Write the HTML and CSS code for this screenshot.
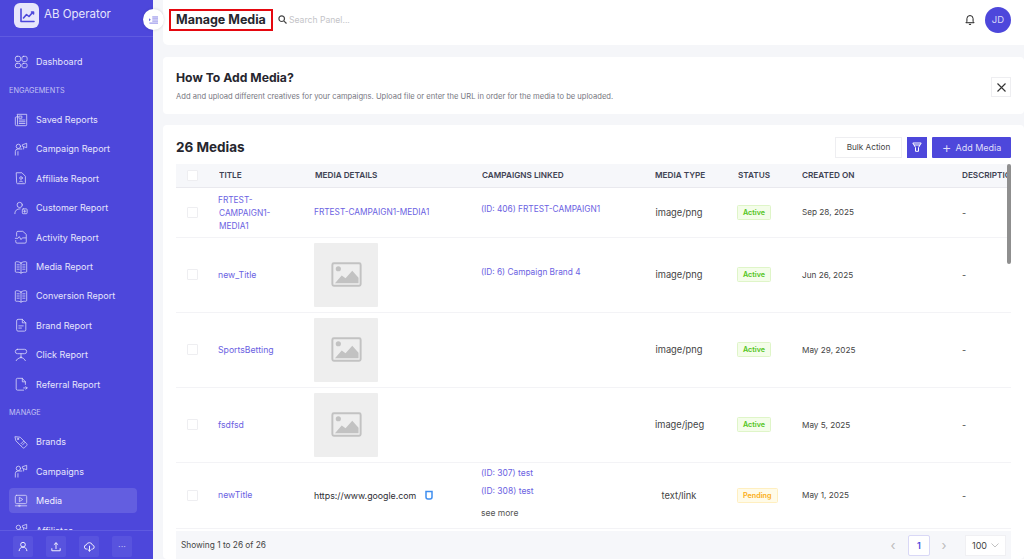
FILE: index.html
```html
<!DOCTYPE html>
<html lang="en">
<head>
<meta charset="utf-8">
<title>Manage Media</title>
<link rel="stylesheet" href="styles.css">
</head>
<body>
<svg class="defs" width="0" height="0">
  <symbol id="i-dash" viewBox="0 0 16 16"><rect x="1.500" y="1.500" width="6" height="6" rx="2"/><rect x="9" y="1.500" width="6" height="6" rx="2"/><rect x="1.500" y="9.500" width="6" height="5" rx="2"/><rect x="9" y="9.500" width="6" height="5" rx="2"/></symbol>
  <symbol id="i-saved" viewBox="0 0 16 16"><path d="M4 1.500h10.500v12a1 1 0 0 1-1 1H3a1.500 1.500 0 0 1-1.500-1.500V5L4 4z"/><path d="M4 4v9"/><rect x="6" y="3.500" width="3" height="2.500"/><path d="M6 8h6.500M6 10h6.500M6 12h6.500"/></symbol>
  <symbol id="i-camp" viewBox="0 0 16 16"><circle cx="5" cy="5" r="2.500"/><path d="M1.500 15v-4a3 3 0 0 1 3-3H9M4.500 11v4M10 3l4.500-1.500v5L10 5zM11 6v2"/></symbol>
  <symbol id="i-aff" viewBox="0 0 16 16"><path d="M3 2h6l4 4v7.500a1 1 0 0 1-1 1H4a1 1 0 0 1-1-1z"/><circle cx="8" cy="8" r="1.500"/><path d="M6 12.500c.5-1.500 3.500-1.500 4 0"/></symbol>
  <symbol id="i-cust" viewBox="0 0 16 16"><circle cx="6.500" cy="4.500" r="3"/><path d="M1 14.500c0-3.500 2-5.500 6-5.500"/><rect x="9.500" y="9" width="5.500" height="5.500" rx="1"/><path d="M12.200 10.500v2.500M11 11.700h2.500"/></symbol>
  <symbol id="i-act" viewBox="0 0 16 16"><path d="M3 7V3a1.500 1.500 0 0 1 1.500-1.500H10L14 5v8.500a1.500 1.500 0 0 1-1.500 1.500h-9A1.500 1.500 0 0 1 2 13.500V12"/><path d="M1.500 9.500h3l1.500-2 2 3.500 1.500-2h4"/></symbol>
  <symbol id="i-book" viewBox="0 0 16 16"><path d="M8 3.500C6.500 2 4 1.800 2.500 2A1 1 0 0 0 1.500 3v10a1 1 0 0 0 1 1c2 0 4 0 5.500 1 1.500-1 3.500-1 5.500-1a1 1 0 0 0 1-1V3a1 1 0 0 0-1-1C12 1.800 9.500 2 8 3.500zM8 3.500V15M3.500 5.500h2.500M3.500 8h2.500M3.500 10.500h2.500M10 5.500h2.500M10 8h2.500M10 10.500h2.500"/></symbol>
  <symbol id="i-doc" viewBox="0 0 16 16"><path d="M3 3a1.500 1.500 0 0 1 1.500-1.500H9.500L13.500 5.500v8a1.500 1.500 0 0 1-1.500 1.500H4.500A1.500 1.500 0 0 1 3 13.500zM9.500 1.500v4h4M5.500 9h5M5.500 11.500h3"/></symbol>
  <symbol id="i-click" viewBox="0 0 16 16"><rect x="1.500" y="1.500" width="13" height="5" rx="2.500"/><path d="M8 6.500v4M8 10.500l-4 2-1.500 2M8 10.500l3 1.500 2 2.500M8 10.500v1"/></symbol>
  <symbol id="i-ref" viewBox="0 0 16 16"><path d="M13 8.500V5.500L9.500 1.500H4A1.500 1.500 0 0 0 2.500 3v10.500A1.500 1.500 0 0 0 4 15h7M9.500 1.500v4H13M11 12.500h4M13.500 11l1.500 1.500-1.500 1.500"/></symbol>
  <symbol id="i-tag" viewBox="0 0 16 16"><path d="M1.500 2l5.500.5 7.500 7.500a1.500 1.500 0 0 1 0 2l-2.500 2.500a1.500 1.500 0 0 1-2 0L2.500 7z"/><circle cx="4.500" cy="4.500" r=".8"/><path d="M8 10l3-3M9.500 11.500l3-3"/></symbol>
  <symbol id="i-media" viewBox="0 0 16 16"><rect x="1.500" y="1.500" width="13" height="9.500" rx="1.500"/><path d="M6.500 4l3.500 2.200-3.500 2.300zM1.500 13.500h13"/><circle cx="6" cy="13.500" r=".8"/></symbol>
  <symbol id="i-pic" viewBox="0 0 32 26"><rect x="1.300" y="1.300" width="29.400" height="23.400" rx="1.500" fill="none" stroke="currentColor" stroke-width="2"/><circle cx="7.500" cy="7" r="2.700" fill="currentColor"/><path d="M4 22l7-8 4 3 7-8 6.500 7.500V22z" fill="currentColor"/></symbol>
</svg>

<aside class="sidebar">
  <div class="brand">
    <span class="brand-logo"><svg width="20" height="20" viewBox="0 0 20 20" fill="none" stroke="#4d47db" stroke-width="1.600" stroke-linecap="round" stroke-linejoin="round"><path d="M4 3v12.500h13"/><path d="M6.500 12l3-3.500 2.500 2 4-4.500M14.500 6H16.500V8"/></svg></span>
    <span class="brand-name">AB Operator</span>
  </div>
  <nav class="nav">
    <a class="nav-item nav-last"><svg class="nav-icon"><use href="#i-dash"/></svg>Dashboard</a>
    <div class="nav-label">ENGAGEMENTS</div>
    <a class="nav-item"><svg class="nav-icon"><use href="#i-saved"/></svg>Saved Reports</a>
    <a class="nav-item"><svg class="nav-icon"><use href="#i-camp"/></svg>Campaign Report</a>
    <a class="nav-item"><svg class="nav-icon"><use href="#i-aff"/></svg>Affiliate Report</a>
    <a class="nav-item"><svg class="nav-icon"><use href="#i-cust"/></svg>Customer Report</a>
    <a class="nav-item"><svg class="nav-icon"><use href="#i-act"/></svg>Activity Report</a>
    <a class="nav-item"><svg class="nav-icon"><use href="#i-book"/></svg>Media Report</a>
    <a class="nav-item"><svg class="nav-icon"><use href="#i-book"/></svg>Conversion Report</a>
    <a class="nav-item"><svg class="nav-icon"><use href="#i-doc"/></svg>Brand Report</a>
    <a class="nav-item"><svg class="nav-icon"><use href="#i-click"/></svg>Click Report</a>
    <a class="nav-item nav-last"><svg class="nav-icon"><use href="#i-ref"/></svg>Referral Report</a>
    <div class="nav-label">MANAGE</div>
    <a class="nav-item"><svg class="nav-icon"><use href="#i-tag"/></svg>Brands</a>
    <a class="nav-item"><svg class="nav-icon"><use href="#i-camp"/></svg>Campaigns</a>
    <a class="nav-item active"><svg class="nav-icon"><use href="#i-media"/></svg>Media</a>
    <a class="nav-item"><svg class="nav-icon"><use href="#i-camp"/></svg>Affiliates</a>
  </nav>
  <div class="side-foot">
    <span class="foot-btn"><svg width="10" height="11" viewBox="0 0 12 12" fill="none" stroke="#eeedfd" stroke-width="1.200"><circle cx="6" cy="3.800" r="2.800"/><path d="M1.300 11.500c.3-3 2-4.700 4.700-4.700s4.400 1.700 4.700 4.700"/></svg></span>
    <span class="foot-btn"><svg width="10" height="10" viewBox="0 0 12 12" fill="none" stroke="#eeedfd" stroke-width="1.200" stroke-linecap="round" stroke-linejoin="round"><path d="M6 8V1M3.800 3L6 1l2.200 2M1 8v2.500h10V8"/></svg></span>
    <span class="foot-btn"><svg width="11" height="10" viewBox="0 0 13 12" fill="none" stroke="#eeedfd" stroke-width="1.200" stroke-linecap="round" stroke-linejoin="round"><path d="M3.500 8.500H3a2.500 2.500 0 0 1-.3-5A3.800 3.800 0 0 1 10 3.600a2.500 2.500 0 0 1 .2 4.900H9.500M6.500 5v6M4.800 9.300l1.700 1.700 1.700-1.700"/></svg></span>
    <span class="foot-btn foot-more">···</span>
  </div>
</aside>

<button class="collapse" type="button" aria-label="Collapse menu"><svg width="9" height="8" viewBox="0 0 11 9" fill="none" stroke="#6b66e2" stroke-width="1"><path d="M4 .8h7M4 3.200h7M4 5.800h7M.5 8.300h10.500"/><path d="M0 2.500l2.300 1.800L0 6z" fill="#6b66e2" stroke="none"/></svg></button>

<main class="main">
  <header class="topbar">
    <div class="topbar-left">
      <h1 class="page-title">Manage Media</h1>
      <svg class="search-icon" width="9" height="9" viewBox="0 0 9 9" fill="none" stroke="#444" stroke-width="1.200"><circle cx="3.700" cy="3.700" r="2.800"/><path d="M5.800 5.800L8.500 8.500"/></svg>
      <span class="search-text">Search Panel...</span>
    </div>
    <div class="topbar-right">
      <svg width="10" height="12" viewBox="0 0 11 12" fill="none" stroke="#222" stroke-width="1.100" stroke-linejoin="round"><path d="M1 9h9L8.900 7.500V4.500a3.400 3.400 0 0 0-6.800 0v3zM4.300 10.800h2.400"/></svg>
      <span class="avatar">JD</span>
    </div>
  </header>

  <section class="info card">
    <div>
      <h2 class="info-title">How To Add Media?</h2>
      <p class="info-text">Add and upload different creatives for your campaigns. Upload file or enter the URL in order for the media to be uploaded.</p>
    </div>
    <button class="close" type="button" aria-label="Close"><svg width="9" height="9" viewBox="0 0 9 9" stroke="#333" stroke-width="1.100"><path d="M.5.500l8 8M8.500.500l-8 8"/></svg></button>
  </section>

  <section class="list card">
    <div class="list-head">
      <h2 class="list-title">26 Medias</h2>
      <div class="list-actions">
        <button class="btn-ghost" type="button">Bulk Action</button>
        <button class="btn-filter" type="button" aria-label="Filter"><svg width="10" height="10" viewBox="0 0 10 10" fill="none" stroke="#fff" stroke-width="1"><path d="M.8 1h8.400L6.500 5.500v3.800h-3V5.500zM2 3h6"/></svg></button>
        <button class="btn-primary" type="button"><span class="plus">+</span>Add Media</button>
      </div>
    </div>
    <div class="table-wrap">
      <table class="table">
        <colgroup><col class="c1"><col class="c2"><col class="c3"><col class="c4"><col class="c5"><col class="c6"><col class="c7"><col class="c8"></colgroup>
        <thead>
          <tr><th><span class="check"></span></th><th>TITLE</th><th>MEDIA DETAILS</th><th>CAMPAIGNS LINKED</th><th>MEDIA TYPE</th><th>STATUS</th><th>CREATED ON</th><th>DESCRIPTION</th></tr>
        </thead>
        <tbody>
          <tr class="r1"><td><span class="check"></span></td><td class="link caps stack">FRTEST-<br>CAMPAIGN1-<br>MEDIA1</td><td class="link caps">FRTEST-CAMPAIGN1-MEDIA1</td><td class="link caps up"><div>(ID: 406) FRTEST-CAMPAIGN1</div></td><td class="type">image/png</td><td><span class="badge ok">Active</span></td><td class="date">Sep 28, 2025</td><td>-</td></tr>
          <tr class="r2"><td><span class="check"></span></td><td class="link name">new_Title</td><td><span class="thumb"><svg width="31" height="25"><use href="#i-pic"/></svg></span></td><td class="link caps up"><div>(ID: 6) Campaign Brand 4</div></td><td class="type">image/png</td><td><span class="badge ok">Active</span></td><td class="date">Jun 26, 2025</td><td>-</td></tr>
          <tr class="r2"><td><span class="check"></span></td><td class="link name">SportsBetting</td><td><span class="thumb"><svg width="31" height="25"><use href="#i-pic"/></svg></span></td><td></td><td class="type">image/png</td><td><span class="badge ok">Active</span></td><td class="date">May 29, 2025</td><td>-</td></tr>
          <tr class="r2"><td><span class="check"></span></td><td class="link name">fsdfsd</td><td><span class="thumb"><svg width="31" height="25"><use href="#i-pic"/></svg></span></td><td></td><td class="type">image/jpeg</td><td><span class="badge ok">Active</span></td><td class="date">May 5, 2025</td><td>-</td></tr>
          <tr class="r5"><td><span class="check"></span></td><td class="link name">newTitle</td><td><span class="url">https://www.google.com<svg class="copy" width="8" height="10" viewBox="0 0 8 10"><path d="M1 1.500h6v5.500a2 2 0 0 1-2 2H3a2 2 0 0 1-2-2z" fill="none" stroke="#3f8ef0" stroke-width="1.500"/></svg></span></td><td class="camps"><div class="link camp-line">(ID: 307) test</div><div class="link camp-line">(ID: 308) test</div><div class="see">see more</div></td><td class="type">text/link</td><td><span class="badge wait">Pending</span></td><td class="date">May 1, 2025</td><td>-</td></tr>
        </tbody>
      </table>
      <span class="scroll-thumb"></span>
    </div>
    <footer class="table-foot">
      <span>Showing 1 to 26 of 26</span>
      <div class="pager">
        <span class="pg-arrow">‹</span>
        <span class="pg-num">1</span>
        <span class="pg-arrow">›</span>
        <span class="pg-size">100<svg width="8" height="5" viewBox="0 0 8 5" fill="none" stroke="#bbb" stroke-width=".9"><path d="M.5.500L4 4 7.500.500"/></svg></span>
      </div>
    </footer>
  </section>
</main>
</body>
</html>
```

FILE: styles.css
```css
* { box-sizing: border-box; }
html, body { margin: 0; height: 100%; }
body {
  display: flex;
  height: 559px;
  overflow: hidden;
  background: #f5f6f9;
  font-family: Inter, "Open Sans", sans-serif;
  font-size: 9px;
  color: #333;
}
.defs { position: absolute; }
h1, h2, p { margin: 0; }
button { font: inherit; padding: 0; border: 0; cursor: pointer; }

.sidebar {
  width: 153px;
  flex: none;
  display: flex;
  flex-direction: column;
  height: 559px;
  background: #4d47db;
  color: #e6e5fb;
}
.brand {
  height: 37px;
  flex: none;
  display: flex;
  align-items: flex-start;
  padding: 3px 0 0 14px;
  gap: 5px;
  border-bottom: 1px solid #5f5ae0;
}
.brand-logo {
  width: 25px;
  height: 25px;
  background: #e7e6fb;
  border-radius: 6px;
  display: flex;
  align-items: center;
  justify-content: center;
}
.brand-name { font-size: 11.500px; line-height: 23px; color: #e6e5fb; }

.nav { flex: 1; min-height: 0; overflow: hidden; padding: 12.500px 16px 0 9px; }
.nav-item {
  height: 24.500px;
  margin-bottom: 4.900px;
  display: flex;
  align-items: center;
  gap: 8px;
  padding-left: 5px;
  border-radius: 4px;
}
.nav-last { margin-bottom: 0; }
.nav-icon {
  width: 14px;
  height: 14px;
  flex: none;
  fill: none;
  stroke: #dcdbf9;
  stroke-width: .9;
  stroke-linejoin: round;
  stroke-linecap: round;
}
.nav-label {
  font-size: 7.300px;
  color: #c3c1f3;
  height: 33.300px;
  line-height: 33.300px;
}
.active { background: #635ee0; color: #f1f0fe; }
.side-foot {
  height: 29px;
  flex: none;
  display: flex;
  align-items: flex-start;
  gap: 13px;
  padding: 5px 0 0 13px;
  border-top: 1px solid #5f5ae0;
}
.foot-btn {
  width: 20px;
  height: 21px;
  background: #5853de;
  border-radius: 2px;
  display: flex;
  align-items: center;
  justify-content: center;
}
.foot-more { color: #bfbdf3; font-size: 9px; }

.collapse {
  position: absolute;
  left: 143px;
  top: 9px;
  width: 21px;
  height: 21px;
  border-radius: 50%;
  background: #fff;
  box-shadow: 0 0 3px rgba(0, 0, 0, .15);
  display: flex;
  align-items: center;
  justify-content: center;
}

.main {
  flex: 1;
  min-width: 0;
  padding-left: 10px;
  display: flex;
  flex-direction: column;
  gap: 11px;
}
.card { background: #fff; border-radius: 4px; }
.topbar {
  height: 45px;
  flex: none;
  margin-bottom: 1px;
  background: #fff;
  border-radius: 0 0 0 5px;
  display: flex;
  align-items: center;
  justify-content: space-between;
  padding: 0 13px 6px 6px;
}
.topbar-left { display: flex; align-items: center; }
.page-title {
  width: 104px;
  height: 22px;
  border: 2px solid #e5080f;
  font-size: 12.500px;
  font-weight: 700;
  color: #26262e;
  line-height: 18px;
  padding-left: 5px;
  white-space: nowrap;
}
.search-icon { margin: 0 2px 0 5px; }
.search-text { color: #c4c4c8; font-size: 8.600px; }
.topbar-right { display: flex; align-items: center; gap: 10px; }
.avatar {
  width: 26px;
  height: 26px;
  border-radius: 50%;
  background: #4d47db;
  color: #d9d8f8;
  font-size: 9.500px;
  display: flex;
  align-items: center;
  justify-content: center;
}

.info {
  height: 57px;
  flex: none;
  display: flex;
  align-items: center;
  justify-content: space-between;
  padding: 0 13px;
}
.info-title { font-size: 12.200px; font-weight: 700; color: #26262e; margin-bottom: 7px; }
.info-text { font-size: 7.600px; color: #77777f; }
.close {
  width: 20px;
  height: 20px;
  background: #fff;
  border: 1px solid #eeeef1;
  display: flex;
  align-items: center;
  justify-content: center;
  margin-top: 3px;
}

.list {
  flex: 1;
  min-height: 0;
  display: flex;
  flex-direction: column;
  padding: 0 13px;
}
.list-head {
  height: 39px;
  flex: none;
  display: flex;
  align-items: center;
  justify-content: space-between;
  padding-top: 5px;
}
.list-title { font-size: 13.500px; font-weight: 700; color: #26262e; }
.list-actions { display: flex; gap: 5px; }
.btn-ghost {
  width: 67px;
  height: 21px;
  background: #fff;
  border: 1px solid #eeeef1;
  color: #444;
  font-size: 8.200px;
}
.btn-filter {
  width: 20px;
  height: 21px;
  background: #4d47db;
  display: flex;
  align-items: center;
  justify-content: center;
}
.btn-primary {
  width: 79px;
  height: 21px;
  background: #4d47db;
  color: #dfdefa;
  font-size: 9px;
  border-radius: 1px;
  display: flex;
  align-items: center;
  justify-content: center;
  gap: 4px;
}
.plus { font-size: 15px; line-height: 1; font-weight: 300; }

.table-wrap { flex: 1; min-height: 0; overflow: hidden; position: relative; }
.table { width: 883px; border-collapse: collapse; table-layout: fixed; }
.c1 { width: 43px; }
.c2 { width: 96px; }
.c3 { width: 167px; }
.c4 { width: 173px; }
.c5 { width: 83px; }
.c6 { width: 64px; }
.c7 { width: 160px; }
.c8 { width: 97px; }
th {
  height: 23px;
  padding: 0;
  text-align: left;
  background: #f6f7fa;
  border-bottom: 1px solid #e9e9ee;
  font-size: 8.200px;
  font-weight: 600;
  color: #3d4152;
  white-space: nowrap;
  overflow: hidden;
}
td { padding: 0; border-bottom: 1px solid #f3f3f6; color: #444; font-size: 9px; }
.r1 td { height: 50px; line-height: 13px; }
.r2 td { height: 75px; }
.r5 td { height: 66px; }
.check {
  display: block;
  width: 11px;
  height: 11px;
  margin-left: 11px;
  background: #fff;
  border: 1px solid #eeeef1;
  border-radius: 1px;
}
.link { color: #6b62e2; }
.caps { font-size: 8.300px; text-indent: -1px; }
.stack { padding-top: 3px; }
.name { font-size: 8.700px; text-indent: -1px; }
.date { font-size: 8.200px; }
.up > div { transform: translateY(-3px); }
.type { font-size: 9.300px; padding-right: 35px; text-align: center; }
.badge {
  display: inline-block;
  margin-left: -1px;
  font-size: 7.200px;
  font-weight: 600;
  line-height: 13px;
  padding: 0 5px;
  border-radius: 1.500px;
  border: 1px solid;
}
.ok { color: #52c41a; background: #f4fde9; border-color: #dff5c8; }
.wait { color: #faad14; background: #fffbe8; border-color: #ffefc0; }
.thumb {
  width: 64px;
  height: 64px;
  margin-left: -1px;
  background: #eeeeee;
  border-radius: 1px;
  display: flex;
  align-items: center;
  justify-content: center;
  color: #c2c2c2;
}
.url { color: #2d2d33; font-size: 8.800px; margin-left: -1px; display: flex; align-items: center; gap: 9px; }
.copy { flex: none; }
.camps { transform: translate(-1px, -2px); }
.camp-line { line-height: 18px; font-size: 8.500px; }
.see { line-height: 18px; margin-top: 4px; color: #555; font-size: 8.500px; }
.scroll-thumb {
  position: absolute;
  right: 0;
  top: 0;
  width: 4px;
  height: 100px;
  background: #8f8f8f;
  border-radius: 2px;
}
.table-foot {
  height: 28px;
  flex: none;
  background: #f6f7fa;
  display: flex;
  align-items: center;
  justify-content: space-between;
  padding: 0 5px;
  font-size: 8.300px;
  color: #444;
}
.pager { display: flex; align-items: center; }
.pg-arrow { color: #bbb; font-size: 13px; width: 20px; text-align: center; }
.pg-num {
  width: 22px;
  height: 21px;
  margin: 0 4px 0 5px;
  background: #fff;
  border: 1px solid #d9d8f6;
  border-radius: 2px;
  color: #4d47db;
  font-size: 9px;
  font-weight: 600;
  display: flex;
  align-items: center;
  justify-content: center;
}
.pg-size {
  width: 41px;
  height: 21px;
  margin-left: 11px;
  background: #fff;
  border: 1px solid #f0f0f3;
  font-size: 9px;
  display: flex;
  align-items: center;
  gap: 4px;
  padding-left: 6px;
}
```
